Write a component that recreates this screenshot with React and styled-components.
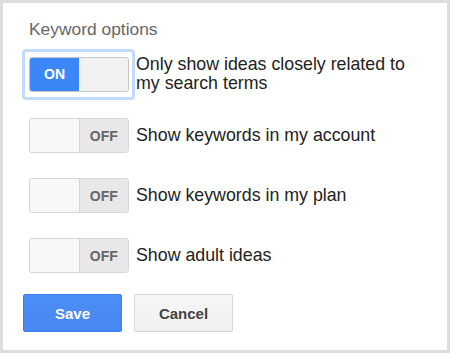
import React, { useState } from "react";
import styled, { createGlobalStyle } from "styled-components";

const GlobalStyle = createGlobalStyle`
  html, body {
    margin: 0;
    padding: 0;
    background: #ffffff;
  }
  body {
    font-family: "Liberation Sans", Arial, Helvetica, sans-serif;
  }
`;

const Frame = styled.div`
  width: 450px;
  height: 353px;
  box-sizing: border-box;
  border: 3px solid #dddddd;
  padding: 17px 0 0 19px;
  display: flex;
  flex-direction: column;
`;

const Heading = styled.div`
  font-size: 17.4px;
  line-height: 19px;
  color: #666666;
  padding-left: 7px;
  margin-bottom: 8px;
`;

const OptionList = styled.div`
  display: flex;
  flex-direction: column;
  gap: 9px;
`;

const Row = styled.div`
  display: flex;
  align-items: center;
  min-height: ${(p) => (p.$tall ? 54 : 51)}px;
  align-self: flex-start;
`;

const ToggleWrap = styled.div`
  box-sizing: border-box;
  width: 113px;
  height: 51px;
  padding: 5px 4px;
  border: 3px solid ${(p) => (p.$focused ? "#c2dafb" : "transparent")};
  border-radius: 4px;
  align-self: ${(p) => (p.$tall ? "flex-start" : "center")};
`;

const Toggle = styled.div`
  box-sizing: border-box;
  width: 100px;
  height: 35px;
  display: flex;
  border: 1px solid ${(p) => (p.$on ? "#c6c6c6" : "#d6d6d6")};
  border-radius: 3px;
  overflow: hidden;
  cursor: pointer;
`;

const Half = styled.div`
  width: 50%;
  display: flex;
  align-items: center;
  justify-content: center;
  font-size: 14px;
  font-weight: bold;
  background: ${(p) => p.$bg};
  color: ${(p) => p.$color};
  border-right: ${(p) => (p.$divider ? "1px solid #d4d4d4" : "none")};
`;

const Label = styled.div`
  font-size: 17.8px;
  line-height: 19px;
  color: #222222;
  margin-left: 1px;
  width: 290px;
`;

const Buttons = styled.div`
  display: flex;
  gap: 12px;
  margin-top: 13px;
  margin-left: 1px;
`;

const Button = styled.button`
  box-sizing: border-box;
  width: 99px;
  height: 38px;
  border-radius: 2px;
  font-family: "Liberation Sans", Arial, sans-serif;
  font-size: 15px;
  font-weight: bold;
  cursor: pointer;
  border: 1px solid ${(p) => (p.$primary ? "#3a7ff0" : "#d8d8d8")};
  background: ${(p) =>
    p.$primary
      ? "linear-gradient(#4b8ef6, #4787f0)"
      : "linear-gradient(#f6f6f6, #f1f1f1)"};
  color: ${(p) => (p.$primary ? "#ffffff" : "#444444")};
`;

const OPTIONS = [
  { id: "related", label: "Only show ideas closely related to my search terms", on: true },
  { id: "account", label: "Show keywords in my account", on: false },
  { id: "plan", label: "Show keywords in my plan", on: false },
  { id: "adult", label: "Show adult ideas", on: false },
];

const Switch = ({ on, onClick }) => (
  <Toggle $on={on} onClick={onClick}>
    {on ? (
      <>
        <Half $bg="#3b87f7" $color="#ffffff">ON</Half>
        <Half $bg="#f1f1f1" />
      </>
    ) : (
      <>
        <Half $bg="#f7f7f7" $divider />
        <Half $bg="#e8e8e8" $color="#666666">OFF</Half>
      </>
    )}
  </Toggle>
);

const App = () => {
  const [values, setValues] = useState(
    Object.fromEntries(OPTIONS.map((o) => [o.id, o.on]))
  );
  return (
    <>
      <GlobalStyle />
      <Frame>
        <Heading>Keyword options</Heading>
        <OptionList>
          {OPTIONS.map((o, i) => (
            <Row key={o.id} $tall={i === 0}>
              <ToggleWrap $focused={i === 0}>
                <Switch
                  on={values[o.id]}
                  onClick={() => setValues({ ...values, [o.id]: !values[o.id] })}
                />
              </ToggleWrap>
              <Label>{o.label}</Label>
            </Row>
          ))}
        </OptionList>
        <Buttons>
          <Button $primary>Save</Button>
          <Button>Cancel</Button>
        </Buttons>
      </Frame>
    </>
  );
};

export default App;
